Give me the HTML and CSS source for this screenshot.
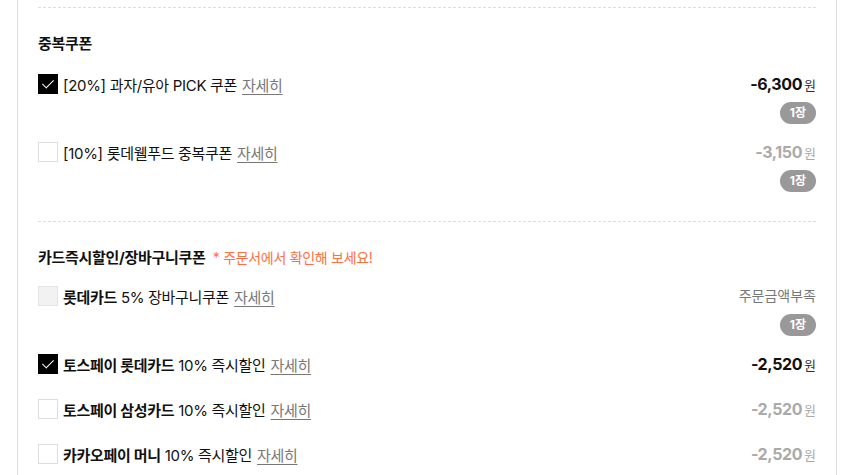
FILE: index.html
```html
<!DOCTYPE html>
<html lang="ko">
<head>
    <meta charset="UTF-8">
    <meta name="viewport" content="width=device-width, initial-scale=1.0">
    <title>쿠폰 적용</title>
    <link rel="stylesheet" href="styles.css">
</head>
<body>
    <div class="coupon-box">
        <div class="coupon-group">
            <h3 class="group-title">중복쿠폰</h3>
            <div class="coupon-row">
                <label class="coupon-label">
                    <span class="check checked"></span>
                    <span class="coupon-name">[20%] 과자/유아 PICK 쿠폰</span>
                    <a href="#" class="detail">자세히</a>
                </label>
                <div class="coupon-side">
                    <div class="price"><strong>-6,300</strong><span class="won">원</span></div>
                    <span class="badge">1장</span>
                </div>
            </div>
            <div class="coupon-row">
                <label class="coupon-label">
                    <span class="check"></span>
                    <span class="coupon-name">[10%] 롯데웰푸드 중복쿠폰</span>
                    <a href="#" class="detail">자세히</a>
                </label>
                <div class="coupon-side">
                    <div class="price off"><strong>-3,150</strong><span class="won">원</span></div>
                    <span class="badge">1장</span>
                </div>
            </div>
        </div>

        <div class="coupon-group card">
            <h3 class="group-title">카드즉시할인/장바구니쿠폰 <span class="note">* 주문서에서 확인해 보세요!</span></h3>
            <div class="coupon-row">
                <label class="coupon-label">
                    <span class="check disabled"></span>
                    <span class="coupon-name"><b>롯데카드</b> 5% 장바구니쿠폰</span>
                    <a href="#" class="detail">자세히</a>
                </label>
                <div class="coupon-side">
                    <div class="lack">주문금액부족</div>
                    <span class="badge">1장</span>
                </div>
            </div>
            <div class="coupon-row">
                <label class="coupon-label">
                    <span class="check checked"></span>
                    <span class="coupon-name"><b>토스페이 롯데카드</b> 10% 즉시할인</span>
                    <a href="#" class="detail">자세히</a>
                </label>
                <div class="coupon-side">
                    <div class="price"><strong>-2,520</strong><span class="won">원</span></div>
                </div>
            </div>
            <div class="coupon-row">
                <label class="coupon-label">
                    <span class="check"></span>
                    <span class="coupon-name"><b>토스페이 삼성카드</b> 10% 즉시할인</span>
                    <a href="#" class="detail">자세히</a>
                </label>
                <div class="coupon-side">
                    <div class="price off"><strong>-2,520</strong><span class="won">원</span></div>
                </div>
            </div>
            <div class="coupon-row">
                <label class="coupon-label">
                    <span class="check"></span>
                    <span class="coupon-name"><b>카카오페이 머니</b> 10% 즉시할인</span>
                    <a href="#" class="detail">자세히</a>
                </label>
                <div class="coupon-side">
                    <div class="price off"><strong>-2,520</strong><span class="won">원</span></div>
                </div>
            </div>
        </div>
    </div>
</body>
</html>
```

FILE: styles.css
```css
body {
    margin: 0;
    background-color: #fff;
    font-family: Inter, "Noto Sans CJK KR", sans-serif;
    color: #111;
}
.coupon-box {
    margin: 0 15px 0 17px;
    padding: 7px 20px 0;
    border-left: 1px solid #ddd;
    border-right: 1px solid #ddd;
    min-height: 468px;
}
.coupon-group {
    border-top: 1px dashed #ddd;
    padding: 26px 0 29px;
}
.coupon-group.card {
    padding-bottom: 0;
}
.group-title {
    margin: 0 0 18px;
    font-size: 15px;
    font-weight: 700;
    line-height: 20px;
    letter-spacing: -0.3px;
}
.card .group-title {
    margin-bottom: 16px;
}
.note {
    margin-left: 4px;
    font-size: 14px;
    font-weight: 400;
    color: #ff6f3f;
}
.coupon-row {
    display: flex;
    justify-content: space-between;
    align-items: flex-start;
    min-height: 29px;
    margin-bottom: 16px;
}
.coupon-row:last-child {
    margin-bottom: 0;
}
.coupon-label {
    display: flex;
    align-items: center;
    height: 24px;
    font-size: 15px;
    letter-spacing: -0.3px;
    cursor: pointer;
}
.coupon-name b {
    font-weight: 700;
}
.check {
    width: 18px;
    height: 18px;
    border: 1px solid #ddd;
    background-color: #fff;
    margin-right: 5px;
    position: relative;
}
.check.checked {
    background-color: #000;
    border-color: #000;
}
.check.checked::after {
    content: "";
    position: absolute;
    left: 6px;
    top: 2px;
    width: 5px;
    height: 10px;
    border: solid #fff;
    border-width: 0 1.5px 1.5px 0;
    transform: rotate(45deg);
}
.check.disabled {
    background-color: #f2f2f2;
    border-color: #e4e4e4;
}
.detail {
    margin-left: 5px;
    color: #777;
    text-decoration: underline;
    text-underline-offset: 3px;
}
.coupon-side {
    display: flex;
    flex-direction: column;
    align-items: flex-end;
}
.price {
    height: 24px;
    line-height: 24px;
    font-size: 16px;
}
.price strong {
    font-weight: 700;
    letter-spacing: -0.4px;
}
.price .won {
    margin-left: 2px;
    font-size: 13px;
    color: #333;
}
.price.off strong,
.price.off .won {
    color: #aaa;
}
.lack {
    height: 24px;
    line-height: 24px;
    font-size: 14px;
    color: #777;
}
.badge {
    margin-top: 6px;
    height: 22px;
    line-height: 22px;
    padding: 0 10px;
    border-radius: 11px;
    background-color: #999;
    color: #fff;
    font-size: 12px;
    font-weight: 700;
}
```
